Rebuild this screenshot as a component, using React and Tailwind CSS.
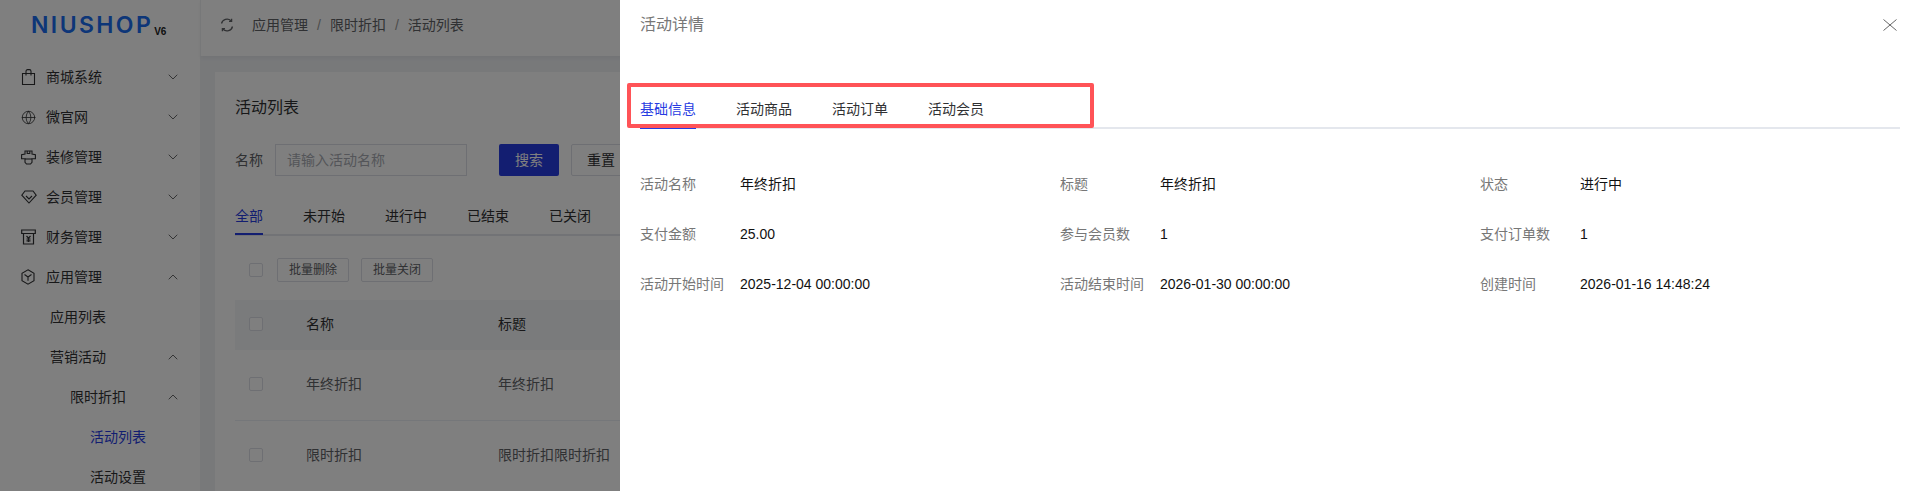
import { ChevronDown, ChevronUp, Globe } from 'lucide-react';

const FONT = "font-['Liberation_Sans','Noto_Sans_CJK_SC',sans-serif]";

const BagIcon = () => (
  <svg width="15" height="16" viewBox="0 0 15 16" fill="none" stroke="currentColor" strokeWidth="1.100">
    <path d="M1.500 4.500h12v11h-12z" />
    <path d="M5 6.500V2.200C5 1.300 5.700.6 6.600.6h1.800c.9 0 1.600.7 1.600 1.600v4.300" />
  </svg>
);

const ShopIcon = () => (
  <svg width="15" height="15" viewBox="0 0 15 15" fill="none" stroke="currentColor" strokeWidth="1.100">
    <path d="M4 1h7v3l3.400.8v4H11v3.500L9.500 14h-4L4 12.300V8.800H.6v-4L4 4z" />
    <path d="M6.200 1v2.500h2.600V1" />
    <path d="M4 9h7" />
  </svg>
);

const DiamondIcon = () => (
  <svg width="16" height="14" viewBox="0 0 16 14" fill="none" stroke="currentColor" strokeWidth="1.100">
    <path d="M4 1h8l3.200 4.200L8 13 .8 5.200z" />
    <path d="M5 6l3 3 3-3" />
  </svg>
);

const WalletIcon = () => (
  <svg width="15" height="16" viewBox="0 0 15 16" fill="none" stroke="currentColor" strokeWidth="1.200">
    <path d="M.7 1h13.600v3.500H.7z" />
    <path d="M2.500 4.500V15h10V4.500" />
    <path d="M5.500 7l2 2.200 2-2.200M7.500 9.200V13M5.500 10h4M5.500 11.800h4" />
  </svg>
);

const BoxIcon = () => (
  <svg width="14" height="16" viewBox="0 0 14 16" fill="none" stroke="currentColor" strokeWidth="1.100">
    <path d="M7 .8l6 3.400v7.600l-6 3.400-6-3.400V4.200z" />
    <path d="M3.500 5.500L7 8l3.500-2.500M7 8v3.800" />
  </svg>
);

const RefreshIcon = () => (
  <svg width="14" height="14" viewBox="0 0 14 14" fill="none" stroke="currentColor" strokeWidth="1.300">
    <path d="M1.500 5.500A5.700 5.700 0 0 1 11 2.700" />
    <path d="M12.500 8.500A5.700 5.700 0 0 1 3 11.300" />
    <path d="M11.600.8v2.600H9M2.400 13.200v-2.600H5" />
  </svg>
);

const CloseIcon = () => (
  <svg width="14" height="12" viewBox="0 0 14 12" fill="none" stroke="currentColor" strokeWidth="1" className="text-[#666] mr-[3px]">
    <path d="M.5.5l13 11M13.500.5l-13 11" />
  </svg>
);

const MENU = [
  { label: '商城系统', icon: <BagIcon /> },
  { label: '微官网', icon: <Globe size={15} strokeWidth={1.3} /> },
  { label: '装修管理', icon: <ShopIcon /> },
  { label: '会员管理', icon: <DiamondIcon /> },
  { label: '财务管理', icon: <WalletIcon /> },
  { label: '应用管理', icon: <BoxIcon />, open: true },
];

const INFO = [
  ['活动名称', '年终折扣'],
  ['标题', '年终折扣'],
  ['状态', '进行中'],
  ['支付金额', '25.00'],
  ['参与会员数', '1'],
  ['支付订单数', '1'],
  ['活动开始时间', '2025-12-04 00:00:00'],
  ['活动结束时间', '2026-01-30 00:00:00'],
  ['创建时间', '2026-01-16 14:48:24'],
];

function Checkbox() {
  return <span className="block w-[14px] h-[14px] rounded-[2px] border border-[#dcdfe6] bg-white shrink-0" />;
}

function Sidebar() {
  return (
    <aside className="w-[200px] shrink-0 bg-white flex flex-col text-sm text-[#303133]">
      <div className="h-[57px] shrink-0 flex items-start pl-[31px] pt-[12px]">
        <span className="font-['Inter',sans-serif] text-[23px] leading-[26px] font-semibold tracking-[2.400px] text-[#1a6cf0]">NIUSHOP</span>
        <span className="font-['Liberation_Sans',sans-serif] text-[10px] font-bold leading-none mt-[15px] ml-[1px] text-[#222]">V6</span>
      </div>
      {MENU.map((item) => (
        <div key={item.label} className="h-10 shrink-0 flex items-center pl-[21px] pr-[19px]">
          <span className="w-[25px] flex items-center">{item.icon}</span>
          <span className="flex-1">{item.label}</span>
          {item.open ? <ChevronUp size={16} strokeWidth={1.1} /> : <ChevronDown size={16} strokeWidth={1.1} />}
        </div>
      ))}
      <div className="h-10 shrink-0 flex items-center pl-[50px]">应用列表</div>
      <div className="h-10 shrink-0 flex items-center pl-[50px] pr-[19px] justify-between">
        营销活动
        <ChevronUp size={16} strokeWidth={1.1} />
      </div>
      <div className="h-10 shrink-0 flex items-center pl-[70px] pr-[19px] justify-between">
        限时折扣
        <ChevronUp size={16} strokeWidth={1.1} />
      </div>
      <div className="h-10 shrink-0 flex items-center pl-[90px] text-[#273ce2]">活动列表</div>
      <div className="h-10 shrink-0 flex items-center pl-[90px]">活动设置</div>
    </aside>
  );
}

function Main() {
  return (
    <div className="flex-1 min-w-0 flex flex-col bg-[#f0f2f5]">
      <header className="h-14 shrink-0 bg-white border-l border-[#eef0f3] shadow-[0_2px_4px_rgba(0,0,0,0.05)] flex items-center pl-[19px] pb-[6px] text-sm text-[#606266]">
        <RefreshIcon />
        <span className="ml-[18px]">应用管理</span>
        <span className="mx-[9px] text-[#999]">/</span>
        <span>限时折扣</span>
        <span className="mx-[9px] text-[#999]">/</span>
        <span>活动列表</span>
      </header>
      <section className="mt-4 ml-[15px] mr-4 flex-1 bg-white px-5 pt-5 text-sm text-[#303133]">
        <h2 className="text-base leading-[32px]">活动列表</h2>
        <div className="mt-5 flex items-center h-8">
          <span className="w-10 text-[#606266]">名称</span>
          <div className="w-[192px] h-8 border border-[#dcdfe6] flex items-center px-[11px] text-[#a8abb2]">请输入活动名称</div>
          <button className="ml-8 w-[60px] h-8 bg-[#273ce2] text-white rounded-[2px]">搜索</button>
          <button className="ml-3 w-[60px] h-8 border border-[#dcdfe6] rounded-[2px]">重置</button>
        </div>
        <div className="mt-4 h-11 pt-[6px] border-b-2 border-[#e4e7ed] flex items-center gap-10">
          <span className="relative text-[#273ce2]">
            全部
            <span className="absolute left-0 right-0 top-[27px] h-[2px] bg-[#273ce2]" />
          </span>
          <span>未开始</span>
          <span>进行中</span>
          <span>已结束</span>
          <span>已关闭</span>
        </div>
        <div className="mt-[22px] pl-[14px] flex items-center">
          <Checkbox />
          <button className="ml-[14px] w-[72px] h-6 border border-[#dcdfe6] rounded-[2px] text-xs text-[#606266]">批量删除</button>
          <button className="ml-3 w-[72px] h-6 border border-[#dcdfe6] rounded-[2px] text-xs text-[#606266]">批量关闭</button>
        </div>
        <div className="mt-[18px] h-[50px] pb-[2px] bg-[#f5f7f9] flex items-center pl-[14px]">
          <span className="w-[57px]"><Checkbox /></span>
          <span className="w-[192px]">名称</span>
          <span>标题</span>
        </div>
        <div className="h-[71px] pb-[2px] border-b border-[#ebeef5] flex items-center pl-[14px] text-[#606266]">
          <span className="w-[57px]"><Checkbox /></span>
          <span className="w-[192px]">年终折扣</span>
          <span>年终折扣</span>
        </div>
        <div className="h-[70px] pb-[2px] flex items-center pl-[14px] text-[#606266]">
          <span className="w-[57px]"><Checkbox /></span>
          <span className="w-[192px]">限时折扣</span>
          <span>限时折扣限时折扣</span>
        </div>
      </section>
    </div>
  );
}

function Drawer() {
  return (
    <div className="absolute top-0 right-0 bottom-0 w-[1291px] bg-white pl-5 pr-[11px] text-sm">
      <div className="h-[50px] flex items-center justify-between">
        <span className="text-base text-[#777]">活动详情</span>
        <CloseIcon />
      </div>
      <div className="mt-[42px] h-[37px] border-b-2 border-[#e4e7ed] flex gap-10 text-[#303133]">
        <span className="relative h-[37px] leading-[34px] text-[#273ce2]">
          基础信息
          <span className="absolute left-0 right-0 bottom-0 h-[2px] bg-[#273ce2]" />
        </span>
        <span className="leading-[34px]">活动商品</span>
        <span className="leading-[34px]">活动订单</span>
        <span className="leading-[34px]">活动会员</span>
      </div>
      <div className="mt-[45px] w-[1260px] grid grid-cols-3 gap-y-[30px]">
        {INFO.map(([label, value]) => (
          <div key={label} className="flex h-5 leading-5">
            <span className="w-[100px] text-[#777]">{label}</span>
            <span className="text-[#111]">{value}</span>
          </div>
        ))}
      </div>
      {/* Red annotation box around the tabs */}
      <div className="absolute left-[7px] top-[83px] w-[467px] h-[45px] border-4 border-[#ff5357] rounded-[2px]" />
    </div>
  );
}

export default function App() {
  return (
    <div className={`relative w-[1911px] h-[491px] overflow-hidden flex ${FONT}`}>
      <Sidebar />
      <Main />
      <div className="absolute inset-0 bg-black/50" />
      <Drawer />
    </div>
  );
}
